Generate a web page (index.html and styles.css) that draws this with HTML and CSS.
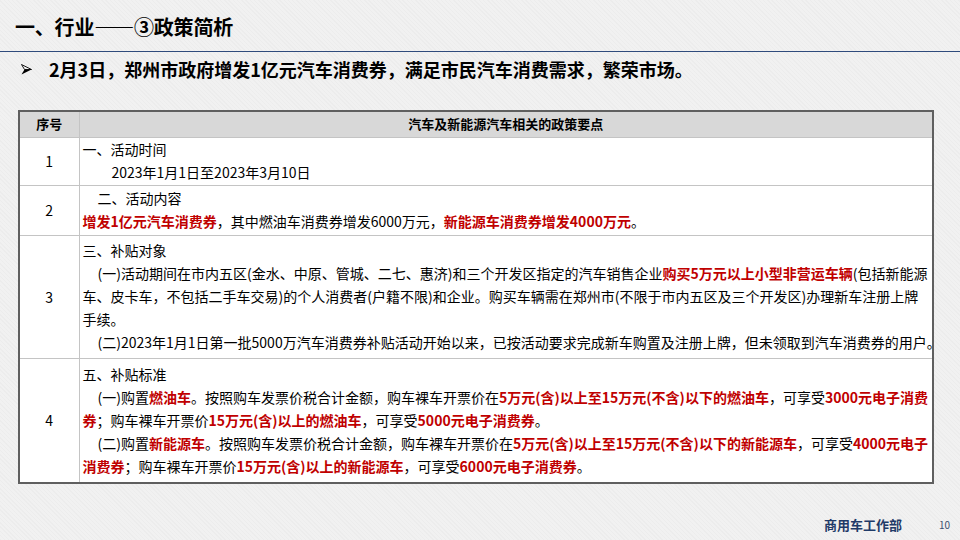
FILE: index.html
```html
<!DOCTYPE html>
<html lang="zh-CN">
<head>
<meta charset="utf-8">
<title>政策简析</title>
<link rel="stylesheet" href="styles.css">
</head>
<body>
<div class="slide">
  <h1 class="title">一、行业——③政策简析</h1>
  <p class="lead">
    <svg class="arrow" width="11" height="11" viewBox="0 0 11 11"><polygon points="0.5,0.5 10.5,5.5 3.5,5.5" fill="none" stroke="#000" stroke-width="0.9"/><polygon points="3.5,5.5 10.5,5.5 0.5,10.5" fill="#000"/></svg>
    <span>2月3日，郑州市政府增发1亿元汽车消费券，满足市民汽车消费需求，繁荣市场。</span>
  </p>
  <table class="policy">
    <colgroup><col class="c-num"><col class="c-txt"></colgroup>
    <thead>
      <tr><th class="num">序号</th><th>汽车及新能源汽车相关的政策要点</th></tr>
    </thead>
    <tbody>
      <tr class="r1">
        <td class="num">1</td>
        <td class="txt">一、活动时间<br><span class="ind2">2023年1月1日至2023年3月10日</span></td>
      </tr>
      <tr class="r2">
        <td class="num">2</td>
        <td class="txt"><span class="ind1">二、活动内容</span><br><b>增发1亿元汽车消费券</b>，其中燃油车消费券增发6000万元，<b>新能源车消费券增发4000万元</b>。</td>
      </tr>
      <tr class="r3">
        <td class="num">3</td>
        <td class="txt">三、补贴对象<br><span class="ind1">(一)活动期间在市内五区(金水、中原、管城、二七、惠济)和三个开发区指定的汽车销售企业<b>购买5万元以上小型非营运车辆</b>(包括新能源</span><br>车、皮卡车，不包括二手车交易)的个人消费者(户籍不限)和企业。购买车辆需在郑州市(不限于市内五区及三个开发区)办理新车注册上牌<br>手续。<br><span class="ind1">(二)2023年1月1日第一批5000万汽车消费券补贴活动开始以来，已按活动要求完成新车购置及注册上牌，但未领取到汽车消费券的用户。</span></td>
      </tr>
      <tr class="r4">
        <td class="num">4</td>
        <td class="txt">五、补贴标准<br><span class="ind1">(一)购置<b>燃油车</b>。按照购车发票价税合计金额，购车裸车开票价在<b>5万元(含)以上至15万元(不含)以下的燃油车</b>，可享受<b>3000元电子消费</b></span><br><b>券</b>；购车裸车开票价<b>15万元(含)以上的燃油车</b>，可享受<b>5000元电子消费券</b>。<br><span class="ind1">(二)购置<b>新能源车</b>。按照购车发票价税合计金额，购车裸车开票价在<b>5万元(含)以上至15万元(不含)以下的新能源车</b>，可享受<b>4000元电子</b></span><br><b>消费券</b>；购车裸车开票价<b>15万元(含)以上的新能源车</b>，可享受<b>6000元电子消费券</b>。</td>
      </tr>
    </tbody>
  </table>
  <footer class="foot">
    <span class="dept">商用车工作部</span>
    <span class="page">10</span>
  </footer>
</div>
</body>
</html>
```

FILE: styles.css
```css
* { box-sizing: border-box; }
html, body { margin: 0; padding: 0; }
body {
  font-family: "Noto Sans CJK SC", "Noto Sans", sans-serif;
  color: #000;
}
.slide {
  width: 960px;
  height: 540px;
  overflow: hidden;
  display: flex;
  flex-direction: column;
  background-color: #f1f1f1;
  background-image: repeating-linear-gradient(45deg, rgba(0,0,0,0.018) 0 1px, rgba(255,255,255,0) 1px 3px);
}
.title {
  margin: 0;
  height: 52px;
  padding: 13px 0 0 15px;
  font-size: 20px;
  line-height: 28px;
  font-weight: 700;
  border-bottom: 1px solid #2f4b7c;
  letter-spacing: -0.2px;
}
.lead {
  margin: 5px 0 0 0;
  padding-left: 20px;
  height: 24px;
  display: flex;
  align-items: center;
  font-size: 18px;
  line-height: 24px;
  font-weight: 700;
}
.arrow { flex: none; margin: 1px 17px 0 1px; }
.policy {
  margin: 29px 0 0 18px;
  width: 916px;
  table-layout: fixed;
  border-collapse: collapse;
  border: 2px solid #5f5f5f;
  background: #fff;
  font-size: 14px;
}
.c-num { width: 60px; }
.policy th {
  background: #d8d8d8;
  height: 26px;
  font-size: 13px;
  font-weight: 700;
  padding: 0;
  line-height: 18px;
  border-bottom: 1px solid #c4c4c4;
  border-left: 1px solid #c4c4c4;
}
.policy td {
  border-top: 1px solid #c4c4c4;
  border-left: 1px solid #c4c4c4;
  vertical-align: middle;
  padding: 0;
}
.policy .num {
  text-align: center;
  border-left: none;
}
.policy td.num { font-size: 14px; }
.txt {
  padding: 0 0 0 3px !important;
  line-height: 23px;
  white-space: nowrap;
}
.txt b { color: #c00000; font-weight: 700; }
.ind1 { padding-left: 15px; }
.ind2 { padding-left: 29px; }
.r1 td { height: 48px; }
.r2 td { height: 50px; }
.r3 td { height: 123px; }
.r4 td { height: 125px; }
.foot {
  margin-top: auto;
  height: 30px;
  display: flex;
  align-items: center;
  justify-content: flex-end;
  padding-right: 10px;
  padding-bottom: 2px;
}
.dept {
  font-size: 13px;
  font-weight: 700;
  color: #1f3a68;
}
.page {
  font-size: 10px;
  color: #3d4f6e;
  margin-left: 37px;
}
```
